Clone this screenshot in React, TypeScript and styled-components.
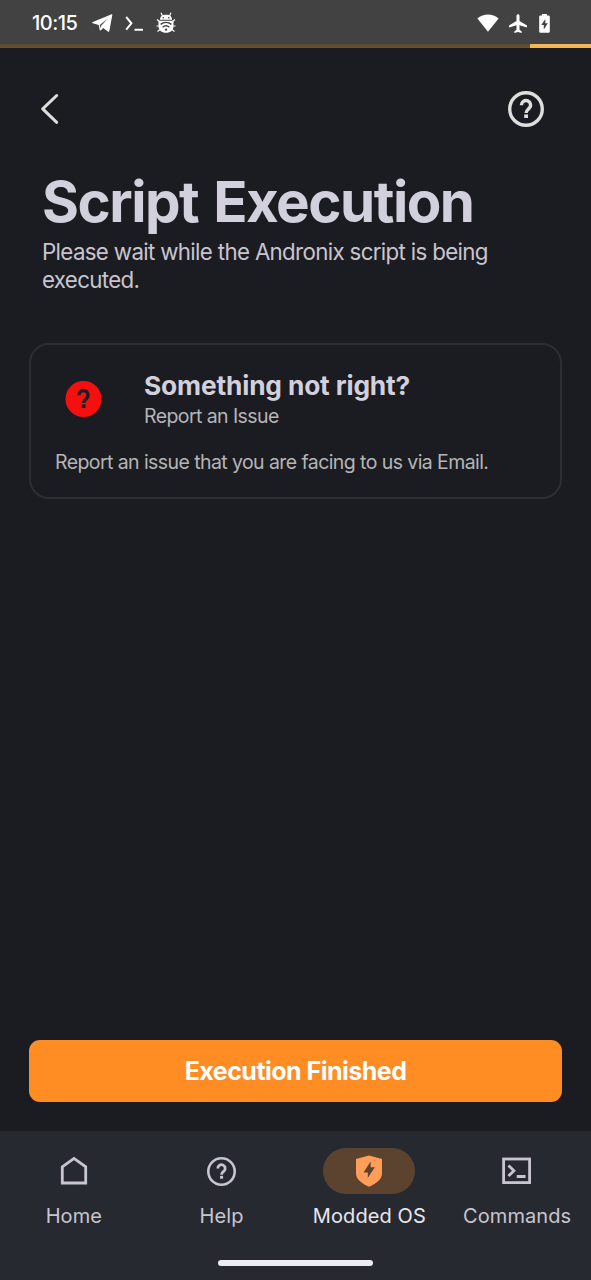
import React from "react";
import styled, { createGlobalStyle } from "styled-components";

const GlobalStyle = createGlobalStyle`
  * { box-sizing: border-box; }
  body { margin: 0; background: #1b1c21; font-family: Inter, Roboto, "Liberation Sans", sans-serif; }
  h1, h2, p { margin: 0; }
  svg { display: block; flex: none; }
`;

const Screen = styled.div`
  display: flex;
  flex-direction: column;
  width: 591px;
  height: 1280px;
  overflow: hidden;
  background: #1b1c21;
`;

const StatusBar = styled.header`
  display: flex;
  align-items: center;
  height: 44px;
  padding: 2px 39px 0 32px;
  background: #424242;
  color: #fff;
`;

const Clock = styled.span`
  width: 60px;
  font-size: 20px;
  line-height: 24px;
  font-weight: 500;
  letter-spacing: -0.5px;
  white-space: nowrap;
`;

const StatusIcons = styled.div<{ $gap: number }>`
  display: flex;
  align-items: center;
  gap: ${(p) => p.$gap}px;
`;

const Spacer = styled.div`
  flex: 1;
`;

const ProgressTrack = styled.div`
  display: flex;
  justify-content: flex-end;
  height: 4px;
  background: linear-gradient(#5a4a32, #6b522c);
`;

const ProgressBar = styled.div`
  width: 61px;
  background: #f4b656;
`;

const TopBar = styled.nav`
  display: flex;
  align-items: center;
  justify-content: space-between;
  height: 121px;
  padding: 0 47px 0 40px;
`;

const IconButton = styled.button`
  display: flex;
  padding: 0;
  border: 0;
  background: none;
  color: #dedede;
`;

const Heading = styled.section`
  height: 174px;
  padding: 0 42px;
`;

const Title = styled.h1`
  margin-bottom: 3px;
  color: #d2d0dc;
  font-size: 56.5px;
  line-height: 66px;
  font-weight: 700;
  letter-spacing: -1.5px;
  word-spacing: 3px;
  white-space: nowrap;
`;

const Subtitle = styled.p`
  color: #c8c5d0;
  font-size: 22.3px;
  line-height: 28px;
  letter-spacing: -0.66px;
`;

const Card = styled.section`
  height: 156px;
  margin: 0 29px;
  padding: 24px 24px 0;
  border: 2px solid #2d2e33;
  border-radius: 20px;
`;

const CardHead = styled.div`
  display: flex;
  align-items: center;
  gap: 42px;
  padding-left: 10px;
`;

const CardTitle = styled.h2`
  color: #d2d0dc;
  font-size: 26.3px;
  line-height: 34px;
  font-weight: 650;
  letter-spacing: -0.15px;
  white-space: nowrap;
`;

const CardCaption = styled.p`
  padding-top: 1px;
  color: #b5b5b7;
  font-size: 19.5px;
  line-height: 24px;
  letter-spacing: -0.58px;
`;

const CardText = styled.p`
  margin-top: 21px;
  color: #b5b5b7;
  font-size: 19.5px;
  line-height: 26px;
  letter-spacing: -0.58px;
  white-space: nowrap;
`;

const PrimaryButton = styled.button`
  height: 62px;
  margin: 0 29px 29px;
  padding: 0;
  border: 0;
  border-radius: 11px;
  background: #ff8d24;
  color: #fff;
  font: 700 25px Inter, Roboto, sans-serif;
  letter-spacing: -0.52px;
`;

const BottomNav = styled.nav`
  display: flex;
  flex-direction: column;
  height: 149px;
  padding-top: 17px;
  background: #262a30;
`;

const Tabs = styled.div`
  display: grid;
  grid-template-columns: repeat(4, 1fr);
  height: 112px;
`;

const Tab = styled.div<{ $active?: boolean }>`
  display: flex;
  flex-direction: column;
  align-items: center;
  gap: 9px;
  color: ${(p) => (p.$active ? "#e9e7ee" : "#c8c5d0")};
`;

const TabIcon = styled.div<{ $active?: boolean }>`
  display: flex;
  align-items: center;
  justify-content: center;
  width: 92px;
  height: 46px;
  border-radius: 23px;
  background: ${(p) => (p.$active ? "#5c432f" : "transparent")};
`;

const TabLabel = styled.span`
  font-size: 20px;
  line-height: 26px;
  letter-spacing: 0.1px;
  white-space: nowrap;
`;

const HomeIndicator = styled.div`
  width: 155px;
  height: 6px;
  margin: 0 auto;
  border-radius: 3px;
  background: #edebf3;
`;

const QuestionMark = () => (
  <>
    <path d="M13.400 14.200a4.600 4.500 0 1 1 7.800 3.100c-1.500 1.500-3.100 2.200-3.100 4.700" strokeWidth="3.400" />
    <path d="M18.100 23.400v3.600" strokeWidth="3.800" />
  </>
);

const HelpIcon = ({ size, stroke }: { size: number; stroke: number }) => (
  <svg width={size} height={size} viewBox="0 0 36 36" fill="none" stroke="currentColor">
    <circle cx="18" cy="18" r={18 - stroke / 2} strokeWidth={stroke} />
    <QuestionMark />
  </svg>
);

const tabs = [
  {
    label: "Home",
    icon: (
      <svg width="28" height="30" viewBox="0 0 28 30" fill="none" stroke="currentColor" strokeWidth="2.800">
        <path d="M2.300 10.800 14 2.400l11.700 8.400v16.200H2.300z" />
      </svg>
    ),
  },
  { label: "Help", icon: <HelpIcon size={29} stroke={3.2} /> },
  {
    label: "Modded OS",
    active: true,
    icon: (
      <svg width="26" height="32" viewBox="0 0 26 32">
        <path d="M13 .5 26 4v14.500C26 25 19 29 13 31.800 7 29 0 25 0 18.500V4z" fill="#ff9e59" />
        <path d="M14.600 6.500 7.500 17.600h4.300v5.400l7-10.700h-4.200z" fill="#5c432f" />
      </svg>
    ),
  },
  {
    label: "Commands",
    icon: (
      <svg width="30" height="28" viewBox="0 0 30 28" fill="none" stroke="currentColor" strokeWidth="2.800">
        <rect x="1.600" y="2" width="26" height="23.600" />
        <path d="m6.500 8.500 5.400 5.200-5.400 5.200M14.700 19.500h8.800" />
      </svg>
    ),
  },
];

export default function App() {
  return (
    <Screen>
      <GlobalStyle />
      <StatusBar>
        <Clock>10:15</Clock>
        <StatusIcons $gap={12}>
          <svg width="21" height="18" viewBox="0 0 21 18" fill="currentColor">
            <path d="M19.600.3c.5-.2.9.1.7.7l-2.900 15.800c-.2.9-.9 1.100-1.600.6l-4.600-3.300-2.500 2.300c-.4.400-.9.200-1-.3l-1-5.100L.8 9.200c-.8-.3-.8-1 0-1.300zM16 4.500 7.800 11l.6 3.400.7-2.600z" />
          </svg>
          <svg width="19" height="17" viewBox="0 0 19 17" fill="none" stroke="currentColor" strokeWidth="2">
            <path d="m1.200 2 5.200 6.300-5.200 6.300M9.500 14.800h8.500" />
          </svg>
          <svg width="20" height="22" viewBox="0 0 20 22" fill="currentColor">
            <path d="M4 7.800C4 4.300 6.200 2.700 10 2.700s6 1.600 6 5.100z" />
            <path d="M2.500 8.800h15v5c0 4.400-3 7-7.500 7s-7.500-2.600-7.500-7z" />
            <path d="M6.500 4 5 .8M13.500 4 15 .8M3.500 9.500 1 7.500m15.500 2L19 7.500M3 14H.5m16.500 0h2.500M4 17.500l-2.500 2M16 17.500l2.500 2" fill="none" stroke="currentColor" strokeWidth="1.200" />
            <circle cx="7.300" cy="5.700" r=".8" fill="#424242" />
            <circle cx="12.700" cy="5.700" r=".8" fill="#424242" />
            <path d="M4.600 12.400c3.200-2.600 7.600-2.600 10.800 0M6.600 15.200c2-1.600 4.800-1.600 6.800 0" fill="none" stroke="#424242" strokeWidth="1.400" />
            <circle cx="10" cy="17.600" r="1.200" fill="#424242" />
          </svg>
        </StatusIcons>
        <Spacer />
        <StatusIcons $gap={10}>
          <svg width="22" height="18" viewBox="0 0 22 18" fill="currentColor">
            <path d="M.4 4.600C6.500-1 15.500-1 21.600 4.600L11 17.700z" />
          </svg>
          <svg width="18" height="19" viewBox="0 0 18 19" fill="currentColor">
            <path d="M10.500 7V2c0-2.300-3-2.300-3 0v5L0 11.500v2l7.500-2.200v4.500l-2.200 1.600V19L9 18l3.700 1v-1.600l-2.200-1.600v-4.500L18 13.500v-2z" />
          </svg>
          <svg width="15" height="19" viewBox="0 0 15 19" fill="currentColor">
            <path fillRule="evenodd" d="M5 0h5v1.600h1.500q1.300 0 1.300 1.300v14.500q0 1.300-1.300 1.300h-8q-1.300 0-1.300-1.300V2.900q0-1.300 1.300-1.300H5zM8.300 5l-4 6h2.500v4.500l4-6.300H8.300z" />
          </svg>
        </StatusIcons>
      </StatusBar>
      <ProgressTrack>
        <ProgressBar />
      </ProgressTrack>
      <TopBar>
        <IconButton aria-label="Back">
          <svg width="20" height="32" viewBox="0 0 20 32" fill="none" stroke="currentColor" strokeWidth="3" strokeLinecap="round" strokeLinejoin="round">
            <path d="M16.700 2.500 2.700 15.900l14 13.400" />
          </svg>
        </IconButton>
        <IconButton aria-label="Help">
          <HelpIcon size={36} stroke={3.4} />
        </IconButton>
      </TopBar>
      <Heading>
        <Title>Script Execution</Title>
        <Subtitle>Please wait while the Andronix script is being executed.</Subtitle>
      </Heading>
      <Card>
        <CardHead>
          <svg width="37" height="36" viewBox="-.5 0 37 36" fill="none" stroke="#1b1c21">
            <circle cx="18" cy="18" r="18" fill="#f50f0f" stroke="none" />
            <QuestionMark />
          </svg>
          <div>
            <CardTitle>Something not right?</CardTitle>
            <CardCaption>Report an Issue</CardCaption>
          </div>
        </CardHead>
        <CardText>Report an issue that you are facing to us via Email.</CardText>
      </Card>
      <Spacer />
      <PrimaryButton>Execution Finished</PrimaryButton>
      <BottomNav>
        <Tabs>
          {tabs.map((t) => (
            <Tab key={t.label} $active={t.active}>
              <TabIcon $active={t.active}>{t.icon}</TabIcon>
              <TabLabel>{t.label}</TabLabel>
            </Tab>
          ))}
        </Tabs>
        <HomeIndicator />
      </BottomNav>
    </Screen>
  );
}
